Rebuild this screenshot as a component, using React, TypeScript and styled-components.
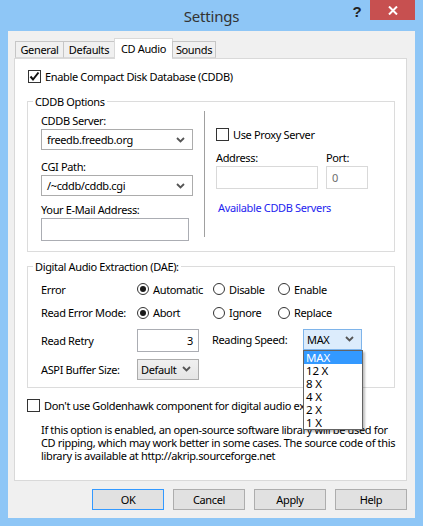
import styled, { createGlobalStyle } from 'styled-components';

const GlobalStyle = createGlobalStyle`
  html, body { margin: 0; padding: 0; background: #8ec6f6; }
  body {
    font-family: "Noto Sans", "Segoe UI", sans-serif;
    font-size: 11px;
    letter-spacing: -0.35px;
    color: #000;
  }
  * { box-sizing: border-box; }
`;

const Window = styled.div`
  width: 423px;
  height: 526px;
  background: #8ec6f6;
  padding: 0 8px 8px;
  display: flex;
  flex-direction: column;
`;

const TitleBar = styled.div`
  height: 31px;
  display: grid;
  grid-template-columns: 1fr auto 1fr;
  align-items: start;
`;

const Title = styled.div`
  grid-column: 2;
  padding-top: 6px;
  font-size: 15px;
  letter-spacing: -0.2px;
  line-height: 20px;
  color: #333;
`;

const Controls = styled.div`
  grid-column: 3;
  justify-self: end;
  display: flex;
`;

const HelpBtn = styled.div`
  width: 26px;
  height: 20px;
  display: flex;
  align-items: center;
  justify-content: center;
  font-family: "Liberation Sans", Arial, sans-serif;
  font-weight: bold;
  font-size: 15px;
  color: #222;
  padding-top: 3px;
`;

const CloseBtn = styled.div`
  width: 45px;
  height: 20px;
  background: #c75050;
  display: flex;
  align-items: center;
  justify-content: center;
`;

const Client = styled.div`
  flex: 1;
  background: #f0f0f0;
  padding: 7px 8px 8px 6px;
  display: flex;
  flex-direction: column;
`;

const TabStrip = styled.div`
  height: 20px;
  display: flex;
  align-items: flex-end;
  padding-left: 2px;
  position: relative;
  z-index: 1;
`;

const Tab = styled.div<{ $active?: boolean; $w: number }>`
  width: ${p => p.$w}px;
  height: ${p => (p.$active ? 21 : 17)}px;
  margin-bottom: ${p => (p.$active ? -1 : 0)}px;
  margin-left: -1px;
  background: ${p => (p.$active ? '#fff' : '#f0f0f0')};
  border: 1px solid ${p => (p.$active ? '#d9d9d9' : '#c6c6c6')};
  border-bottom: ${p => (p.$active ? 'none' : '1px solid #d9d9d9')};
  display: flex;
  align-items: center;
  justify-content: center;
  padding-bottom: ${p => (p.$active ? 2 : 0)}px;
  color: #000;
`;

const Panel = styled.div`
  height: 423px;
  background: #fff;
  border: 1px solid #d9d9d9;
  padding: 11px 11px 0 12px;
  display: flex;
  flex-direction: column;
`;

const CheckRow = styled.label<{ $indent?: number }>`
  display: flex;
  align-items: center;
  gap: 4px;
  height: 13px;
  margin-left: ${p => p.$indent ?? 0}px;
  white-space: nowrap;
`;

const CheckBox = styled.span`
  width: 13px;
  height: 13px;
  flex: none;
  border: 1px solid #333;
  background: #fff;
  display: flex;
  align-items: center;
  justify-content: center;
`;

const Group = styled.fieldset<{ $top: number }>`
  margin: ${p => p.$top}px 0 0;
  border: 1px solid #dcdcdc;
  padding: 0 0 0 5px;
  min-width: 0;
`;

const Legend = styled.legend`
  padding: 0 2px;
  line-height: 15px;
`;

const CddbBody = styled.div`
  display: flex;
  padding: 3px 0 10px 8px;
`;

const Column = styled.div<{ $w: number }>`
  width: ${p => p.$w}px;
  display: flex;
  flex-direction: column;
`;

const Field = styled.div<{ $top?: number; $w?: number }>`
  display: flex;
  flex-direction: column;
  gap: 1px;
  margin-top: ${p => p.$top ?? 0}px;
  width: ${p => (p.$w ? `${p.$w}px` : 'auto')};
`;

const Label = styled.span`
  line-height: 15px;
  white-space: nowrap;
`;

const Combo = styled.div<{ $kind: 'edit' | 'button' | 'open'; $w?: number }>`
  position: relative;
  width: ${p => (p.$w ? `${p.$w}px` : '100%')};
  height: 21px;
  display: flex;
  align-items: center;
  justify-content: space-between;
  padding: 0 7px 0 ${p => (p.$kind === 'edit' ? 5 : 3)}px;
  border: 1px solid ${p => (p.$kind === 'open' ? '#7eb4ea' : '#acacac')};
  background: ${p =>
    p.$kind === 'edit' ? '#fff' : p.$kind === 'open' ? '#dcecfc' : 'linear-gradient(#f0f0f0, #e5e5e5)'};
  white-space: nowrap;
`;

const TextBox = styled.div<{ $w?: number; $muted?: boolean; $right?: boolean }>`
  width: ${p => (p.$w ? `${p.$w}px` : '100%')};
  height: 23px;
  border: 1px solid ${p => (p.$muted ? '#d9d9d9' : '#abadb3')};
  background: #fff;
  color: ${p => (p.$muted ? '#6d6d6d' : '#000')};
  display: flex;
  align-items: center;
  justify-content: ${p => (p.$right ? 'flex-end' : 'flex-start')};
  padding: 0 5px;
`;

const Separator = styled.div`
  width: 1px;
  height: 126px;
  margin: -1px 11px 0;
  background: #a0a0a0;
  flex: none;
`;

const InputRow = styled.div`
  display: flex;
  gap: 8px;
  margin-top: 9px;
`;

const Link = styled.span`
  margin-top: 11px;
  margin-left: 2px;
  line-height: 15px;
  color: #1e1ef0;
`;

const DaeGrid = styled.div`
  display: grid;
  grid-template-columns: 96px 76px 65px 1fr;
  grid-template-rows: 24px 23px 33px 24px;
  align-items: center;
  padding: 3px 0 6px 8px;
`;

const RadioOpt = styled.label`
  display: flex;
  align-items: center;
  gap: 4px;
  white-space: nowrap;
`;

const RadioCircle = styled.span`
  width: 12px;
  height: 12px;
  flex: none;
  border-radius: 50%;
  border: 1px solid #333;
  background: #fff;
  display: flex;
  align-items: center;
  justify-content: center;
`;

const RadioDot = styled.span`
  width: 6px;
  height: 6px;
  border-radius: 50%;
  background: #1a1a1a;
`;

const SpeedCell = styled.div`
  grid-column: 3 / span 2;
  display: flex;
  align-items: center;
  margin-left: -1px;
  margin-top: -3px;
`;

const DropList = styled.div`
  position: absolute;
  left: -1px;
  top: 20px;
  width: 60px;
  background: #fff;
  border: 1px solid #646464;
  box-shadow: 2px 2px 2px rgba(0, 0, 0, 0.25);
  z-index: 2;
  font-size: 11.5px;
  letter-spacing: -0.2px;
`;

const DropItem = styled.div<{ $sel?: boolean }>`
  height: 13px;
  line-height: 13px;
  padding-left: 2px;
  background: ${p => (p.$sel ? '#3399ff' : 'transparent')};
  color: ${p => (p.$sel ? '#fff' : '#000')};
`;

const Note = styled.p`
  margin: 11px 0 0 14px;
  line-height: 13px;
  white-space: nowrap;
`;

const ButtonRow = styled.div`
  margin-top: 8px;
  display: flex;
  justify-content: flex-end;
  gap: 9px;
`;

const Button = styled.div<{ $default?: boolean }>`
  width: 72px;
  height: 21px;
  display: flex;
  align-items: center;
  justify-content: center;
  background: #e1e1e1;
  border: 1px solid ${p => (p.$default ? '#3399ff' : '#adadad')};
`;

const Chevron = () => (
  <svg width="9" height="6" viewBox="0 0 9 6">
    <path d="M1 1 L4.5 4.5 L8 1" fill="none" stroke="#555" strokeWidth="1.8" />
  </svg>
);

const Check = ({ on }: { on?: boolean }) => (
  <CheckBox>
    {on && (
      <svg width="11" height="11" viewBox="0 0 11 11">
        <path d="M1.5 5.5 L4 8.5 L9.5 1.5" fill="none" stroke="#111" strokeWidth="2" />
      </svg>
    )}
  </CheckBox>
);

const Radio = ({ on, label }: { on?: boolean; label: string }) => (
  <RadioOpt>
    <RadioCircle>{on && <RadioDot />}</RadioCircle>
    {label}
  </RadioOpt>
);

const speeds = ['MAX', '12 X', '8 X', '4 X', '2 X', '1 X'];

export default function App() {
  return (
    <>
      <GlobalStyle />
      <Window>
        <TitleBar>
          <Title>Settings</Title>
          <Controls>
            <HelpBtn>?</HelpBtn>
            <CloseBtn>
              <svg width="10" height="9" viewBox="0 0 10 9">
                <path d="M1 0.5 L9 8.5 M9 0.5 L1 8.5" stroke="#fff" strokeWidth="2" />
              </svg>
            </CloseBtn>
          </Controls>
        </TitleBar>
        <Client>
          <TabStrip>
            <Tab $w={49}>General</Tab>
            <Tab $w={52}>Defaults</Tab>
            <Tab $w={59} $active>CD Audio</Tab>
            <Tab $w={44}>Sounds</Tab>
          </TabStrip>
          <Panel>
            <CheckRow $indent={1}>
              <Check on />
              Enable Compact Disk Database (CDDB)
            </CheckRow>

            <Group $top={11}>
              <Legend>CDDB Options</Legend>
              <CddbBody>
                <Column $w={152}>
                  <Field $top={1}>
                    <Label>CDDB Server:</Label>
                    <Combo $kind="edit">freedb.freedb.org<Chevron /></Combo>
                  </Field>
                  <Field $top={9}>
                    <Label>CGI Path:</Label>
                    <Combo $kind="edit">/~cddb/cddb.cgi<Chevron /></Combo>
                  </Field>
                  <Field $top={6}>
                    <Label>Your E-Mail Address:</Label>
                    <TextBox $w={148} />
                  </Field>
                </Column>
                <Separator />
                <Column $w={152}>
                  <CheckRow style={{ marginTop: 16 }}>
                    <Check />
                    Use Proxy Server
                  </CheckRow>
                  <InputRow>
                    <Field $w={102}>
                      <Label>Address:</Label>
                      <TextBox $muted />
                    </Field>
                    <Field $w={42}>
                      <Label>Port:</Label>
                      <TextBox $muted>0</TextBox>
                    </Field>
                  </InputRow>
                  <Link>Available CDDB Servers</Link>
                </Column>
              </CddbBody>
            </Group>

            <Group $top={7}>
              <Legend>Digital Audio Extraction (DAE):</Legend>
              <DaeGrid>
                <Label>Error</Label>
                <Radio on label="Automatic" />
                <Radio label="Disable" />
                <Radio label="Enable" />

                <Label>Read Error Mode:</Label>
                <Radio on label="Abort" />
                <Radio label="Ignore" />
                <Radio label="Replace" />

                <Label>Read Retry</Label>
                <TextBox $w={62} $right>3</TextBox>
                <SpeedCell>
                  <Label style={{ width: 91 }}>Reading Speed:</Label>
                  <Combo $kind="open" $w={59}>
                    MAX<Chevron />
                    <DropList>
                      {speeds.map((s, i) => (
                        <DropItem key={s} $sel={i === 0}>{s}</DropItem>
                      ))}
                    </DropList>
                  </Combo>
                </SpeedCell>

                <Label>ASPI Buffer Size:</Label>
                <Combo $kind="button" $w={62}>Default<Chevron /></Combo>
              </DaeGrid>
            </Group>

            <CheckRow style={{ marginTop: 11 }}>
              <Check />
              Don't use Goldenhawk component for digital audio extraction
            </CheckRow>
            <Note>
              If this option is enabled, an open-source software library will be used for
              <br />
              CD ripping, which may work better in some cases. The source code of this
              <br />
              library is available at http://akrip.sourceforge.net
            </Note>
          </Panel>
          <ButtonRow>
            <Button $default>OK</Button>
            <Button>Cancel</Button>
            <Button>Apply</Button>
            <Button>Help</Button>
          </ButtonRow>
        </Client>
      </Window>
    </>
  );
}
